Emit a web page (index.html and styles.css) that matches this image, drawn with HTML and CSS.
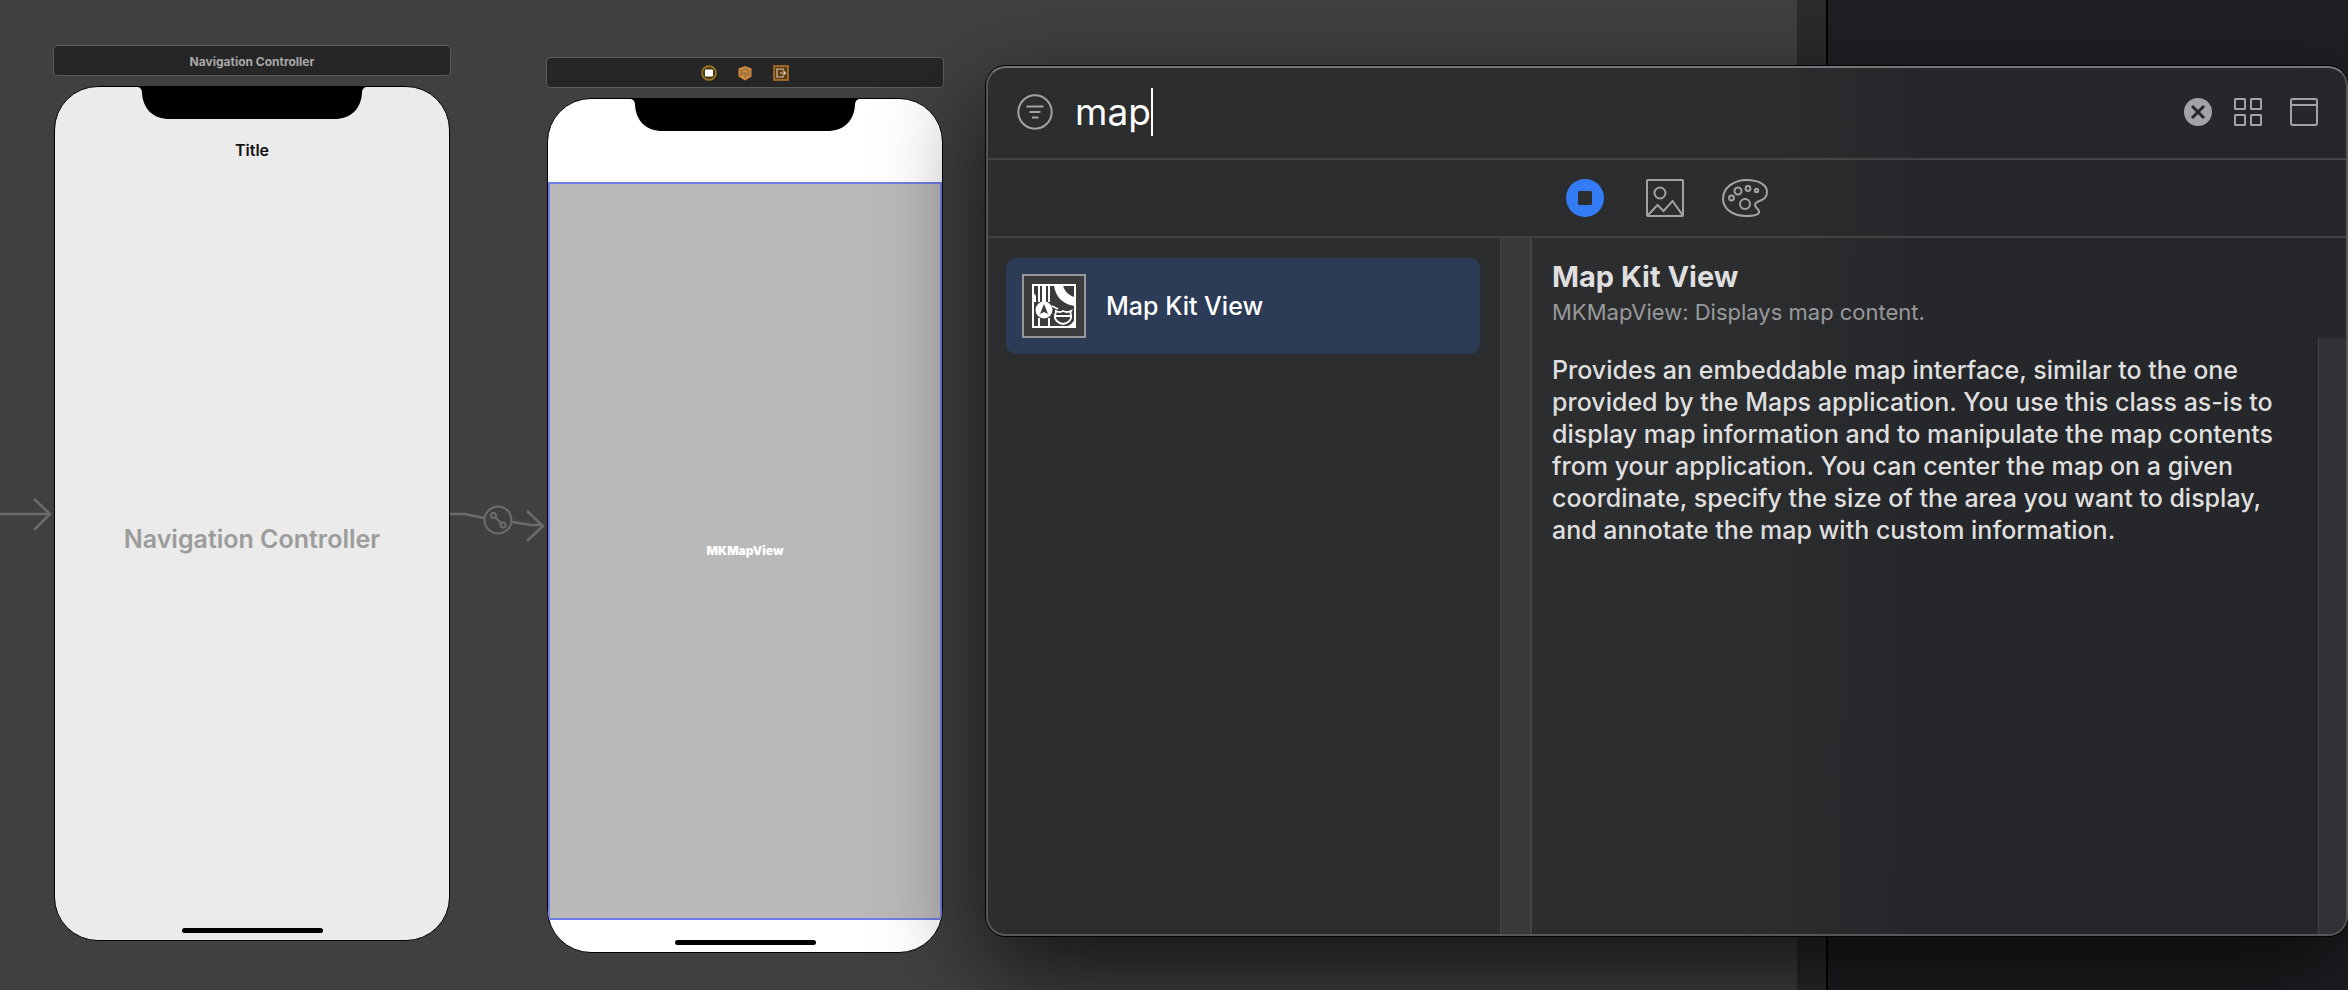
FILE: index.html
```html
<!DOCTYPE html>
<html lang="en">
<head>
<meta charset="utf-8">
<title>Storyboard – Object Library</title>
<link rel="stylesheet" href="styles.css">
</head>
<body>
<main class="canvas">
  <svg class="segue entry" viewBox="0 0 54 40" aria-hidden="true">
    <path d="M0 20H50M34 5L50 20L34 36"/>
  </svg>

  <section class="scene scene-nav">
    <header class="dock">Navigation Controller</header>
    <div class="phone phone-grey">
      <svg class="notch" viewBox="0 0 228 32" aria-hidden="true"><path d="M0 0Q4 1 4 6C5 22 15 32 32 32H196C213 32 223 22 224 6Q224 1 228 0Z"/></svg>
      <h2 class="nav-title">Title</h2>
      <p class="placeholder">Navigation Controller</p>
      <div class="home-bar"></div>
    </div>
  </section>

  <svg class="segue link" viewBox="0 0 96 40" aria-hidden="true">
    <path d="M0 14H15L34 18M62 22L81 25H92M77 11L93 26L77 41"/>
    <g class="thin"><circle cx="48" cy="20" r="13.5"/><circle cx="43.500" cy="15.500" r="2.500"/><circle cx="53" cy="25" r="2.500"/><path d="M45.500 17.500L51 23"/></g>
  </svg>

  <section class="scene scene-map">
    <header class="dock">
      <svg viewBox="0 0 16 16" role="img" aria-label="View Controller"><circle cx="8" cy="8" r="7" fill="#4b3c17" stroke="#a67c24" stroke-width="1.500"/><rect x="4" y="4.500" width="8" height="7" rx="1" fill="#fff"/></svg>
      <svg viewBox="0 0 16 16" role="img" aria-label="First Responder"><path d="M8 1L14.500 3.500V11.500L8 15.500L1.500 11.500V3.500Z" fill="#d08a3a"/><path d="M4 11V6L8 4L12 6V11M8 7V13M6 7V10M10 7V11" fill="none" stroke="#8f6a42" stroke-width="1.200"/></svg>
      <svg viewBox="0 0 16 16" role="img" aria-label="Exit"><rect x="1" y="1" width="14" height="14" fill="#5e3d15" stroke="#b8792d" stroke-width="1.500"/><path d="M10 5.500V4H4V12H10V10.500M7 8H12.500M10.500 6L12.500 8L10.500 10" fill="none" stroke="#dcc6a9" stroke-width="1.200"/></svg>
    </header>
    <div class="phone phone-white">
      <svg class="notch" viewBox="0 0 228 32" aria-hidden="true"><path d="M0 0Q4 1 4 6C5 22 15 32 32 32H196C213 32 223 22 224 6Q224 1 228 0Z"/></svg>
      <div class="map-view">MKMapView</div>
      <div class="home-bar"></div>
    </div>
  </section>
</main>
<div class="gutter"></div>
<aside class="editor"></aside>

<section class="library" aria-label="Library">
  <header class="search">
    <button class="icon-btn" aria-label="Filter"><svg class="i36" viewBox="0 0 36 36"><circle cx="18" cy="18" r="16.700"/><path d="M9.500 12.500H26.500M12.500 18H23.500M15 23.500H21.500"/></svg></button>
    <div class="field">
      <input type="text" value="map" aria-label="Search objects"><span class="caret"></span>
    </div>
    <button class="icon-btn" aria-label="Clear"><svg class="i28" viewBox="0 0 28 28"><circle cx="14" cy="14" r="14" fill="#a2a3a6" stroke="none"/><path d="M8 8L20 20M20 8L8 20" stroke="#26272a" stroke-width="3"/></svg></button>
    <button class="icon-btn grid-btn" aria-label="Icon view"><svg class="i28" viewBox="0 0 28 28"><g><rect x="1" y="1" width="10" height="10" rx=".5"/><rect x="17" y="1" width="10" height="10" rx=".5"/><rect x="1" y="17" width="10" height="10" rx=".5"/><rect x="17" y="17" width="10" height="10" rx=".5"/></g></svg></button>
    <button class="icon-btn window-btn" aria-label="Toggle details"><svg class="i28" viewBox="0 0 28 28"><rect x="1" y="1" width="26" height="26" rx="2"/><path d="M1 7H27"/></svg></button>
  </header>

  <nav class="tabs" aria-label="Library type">
    <button class="icon-btn" aria-label="Objects"><svg class="i38" viewBox="0 0 38 38"><circle cx="19" cy="19" r="19" fill="#347cf6" stroke="none"/><rect x="12" y="12" width="14" height="14" rx="1.500" fill="#2c2d2f" stroke="none"/></svg></button>
    <button class="icon-btn media-btn" aria-label="Media"><svg class="i38" viewBox="0 0 38 38"><rect x="1" y="1" width="36" height="36" rx="1"/><circle cx="14" cy="14" r="5.500"/><path d="M2 36L11.500 26L17.500 32L26.500 22L36.500 36"/></svg></button>
    <button class="icon-btn colors-btn" aria-label="Colors"><svg class="palette" viewBox="0 0 46 38"><path d="M25 1C37 1 45 6 45 13C45 23 33 21 33 26C33 29 37 29 37 33C37 36 32 37 24 37C10 37 1 29 1 20C1 9 11 1 25 1Z"/><circle cx="16" cy="12" r="3.500"/><circle cx="26" cy="9.500" r="2.400"/><circle cx="34.500" cy="11.500" r="1.700"/><circle cx="9.500" cy="19" r="2.400"/><circle cx="23" cy="25" r="5"/></svg></button>
  </nav>

  <div class="columns">
    <ul class="results">
      <li><button class="result">
        <svg class="thumb" viewBox="0 0 64 64" aria-hidden="true">
          <rect x="1" y="1" width="62" height="62" fill="#3a3b3d" stroke="#98989b" stroke-width="2"/>
          <path d="M11 11H53V53H11Z" fill="none" stroke="#fff" stroke-width="2"/>
          <path d="M17 11V28M27 11V28M17 44V53M27 44V53" stroke="#fff" stroke-width="2"/>
          <path d="M20 11H24V28H20ZM11 18L14 22V28H11ZM32 11H41C42 17 47 22 53 23V32C42 31 33 23 32 11ZM53 44V53H44C49 51 52 48 53 44Z" fill="#fff"/>
          <path d="M30 32L36 35" stroke="#fff" stroke-width="1.500"/>
          <circle cx="22" cy="36" r="8.500" fill="#fff"/>
          <path d="M22 30L26 40L22 38L18 40Z" fill="#3a3b3d"/>
          <path d="M34 37Q38 39 41 37Q45 39 49 37Q48 39 49 41C50 46 46 49 41 50C36 49 32 46 33 41Q34 39 34 37ZM33 42H49" fill="#3a3b3d" stroke="#fff" stroke-width="1.800"/>
        </svg>
        <span>Map Kit View</span>
      </button></li>
    </ul>
    <div class="divider"></div>
    <article class="details">
      <header>
        <h1>Map Kit View</h1>
        <p class="summary">MKMapView: Displays map content.</p>
      </header>
      <div class="doc">
        <p>Provides an embeddable map interface, similar to the one provided by the Maps application. You use this class as-is to display map information and to manipulate the map contents from your application. You can center the map on a given coordinate, specify the size of the area you want to display, and annotate the map with custom information.</p>
        <div class="track"></div>
      </div>
    </article>
  </div>
</section>
</body>
</html>
```

FILE: styles.css
```css
* { box-sizing: border-box; }

body {
  margin: 0;
  height: 100vh;
  display: flex;
  position: relative;
  overflow: hidden;
  background: #404040;
  font-family: Inter, "Liberation Sans", sans-serif;
}

h1, h2, p, ul { margin: 0; padding: 0; }
ul { list-style: none; }
button, input { font: inherit; color: inherit; border: 0; background: none; padding: 0; }
svg { display: block; flex: none; }

/* Storyboard canvas: scenes sit at free positions */
.canvas { flex: 1; position: relative; background: #404040; }
.gutter { width: 31px; background: #2b2b2b; border-right: 2px solid #000; }
.editor { width: 520px; background: #1f2024; }

.scene { position: absolute; width: 398px; }
.scene-nav { left: 53px; top: 45px; }
.scene-map { left: 546px; top: 57px; }

.dock {
  height: 31px;
  display: flex;
  align-items: center;
  justify-content: center;
  gap: 20px;
  border: 1px solid #5c5c5c;
  border-radius: 4px;
  background: #262626;
  color: #a9a9a9;
  font-size: 12px;
  font-weight: 700;
}
.scene-nav .dock { padding-top: 2px; }
.dock svg { width: 16px; height: 16px; }

.phone {
  height: 855px;
  margin: 10px 1px 0;
  display: flex;
  flex-direction: column;
  align-items: center;
  border: 1px solid #000;
  border-radius: 44px;
  overflow: hidden;
}
.phone-grey { background: #ebebeb; }
.phone-white { background: #fff; }
.notch { width: 228px; height: 32px; fill: #000; }

.nav-title { margin-top: 21px; font-size: 16px; line-height: 20px; font-weight: 600; color: #111; }
.placeholder { margin: auto 0; padding-bottom: 10px; font-size: 25px; line-height: 32px; font-weight: 600; color: #9c9c9c; }
.home-bar { width: 141px; height: 5px; margin-bottom: 7px; border-radius: 3px; background: #000; }

.map-view {
  align-self: stretch;
  flex: 1;
  margin: 51px 0 20px;
  padding-bottom: 2px;
  display: flex;
  align-items: center;
  justify-content: center;
  border: 2px solid #6f7de6;
  background: #b9b9b9;
  color: #fff;
  font-size: 12px;
  font-weight: 900;
}

.segue { position: absolute; overflow: visible; fill: none; stroke: #6c6c6c; stroke-width: 2.5; }
.segue .thin { stroke-width: 2; }
.entry { left: 0; top: 494px; width: 54px; height: 40px; }
.link { left: 450px; top: 500px; width: 96px; height: 40px; }

/* Floating library window */
.library {
  position: absolute;
  left: 986px;
  right: 0;
  top: 66px;
  bottom: 54px;
  display: flex;
  flex-direction: column;
  border: 2px solid #555658;
  border-top-color: #747576;
  border-radius: 20px;
  background: linear-gradient(91deg, #2c2d2f 56%, #26272a 68%);
  box-shadow: 0 0 0 1px #000, 0 36px 100px rgba(0, 0, 0, .7);
  overflow: hidden;
}

.search {
  height: 92px;
  display: flex;
  align-items: center;
  padding: 0 28px 2px 29px;
  border-bottom: 2px solid #434446;
}
.icon-btn { flex: none; }
.icon-btn svg { fill: none; stroke: #a2a3a6; stroke-width: 2; }
.i28 { width: 28px; height: 28px; }
.i36 { width: 36px; height: 36px; }
.i38 { width: 38px; height: 38px; }
.palette { width: 46px; height: 38px; }
.grid-btn { margin-left: 22px; }
.window-btn { margin-left: 28px; }

.field { flex: 1; display: flex; align-items: center; padding-left: 22px; }
.field input { field-sizing: content; height: 48px; padding-bottom: 2px; font-size: 37px; color: #fff; outline: 0; }
.caret { width: 2px; height: 48px; background: #fff; }

.tabs {
  height: 78px;
  display: flex;
  align-items: center;
  justify-content: center;
  border-bottom: 2px solid #414244;
}
.media-btn { margin-left: 42px; }
.colors-btn { margin-left: 38px; }

.columns { flex: 1; display: flex; min-height: 0; }
.results { width: 512px; padding: 20px 20px 0 18px; }
.result {
  width: 100%;
  height: 96px;
  display: flex;
  align-items: center;
  gap: 20px;
  padding: 0 16px;
  border-radius: 10px;
  background: #2d3c56;
  color: #fff;
  font-size: 25px;
  font-weight: 500;
}
.thumb { width: 64px; height: 64px; }

.divider { width: 32px; background: #38393b; border: solid #464648; border-width: 0 2px 0 1px; }

.details { flex: 1; min-width: 0; display: flex; flex-direction: column; color: #dfdfdf; }
.details header { height: 100px; padding: 19px 20px 0; }
.details h1 { font-size: 29px; line-height: 40px; font-weight: 700; }
.summary { font-size: 22px; line-height: 30px; color: #98999b; }
.doc { flex: 1; display: flex; }
.doc p { flex: 1; padding: 16px 20px 0; font-size: 25px; line-height: 32px; font-weight: 500; }
.track { width: 28px; background: #303134; border-left: 1px solid #434446; }
```
